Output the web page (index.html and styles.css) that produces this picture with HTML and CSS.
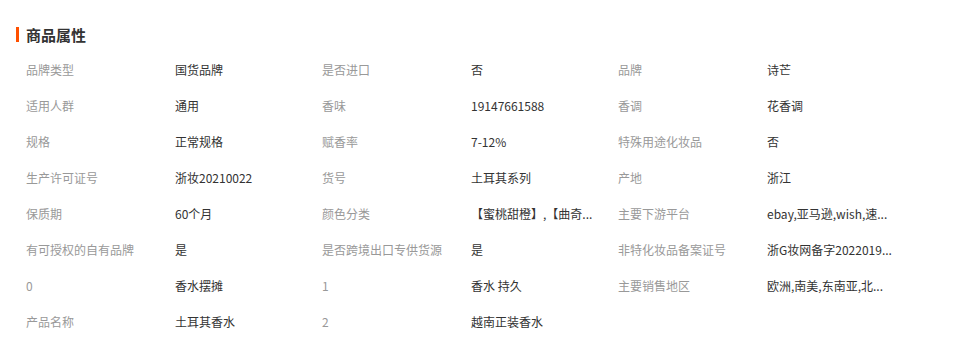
FILE: index.html
```html
<!DOCTYPE html>
<html lang="zh-CN">
<head>
<meta charset="utf-8">
<link rel="stylesheet" href="styles.css">
</head>
<body>
<div class="attrs">
  <h2 class="attrs-title">商品属性</h2>
  <div class="attrs-grid">
    <div class="cell"><span class="label">品牌类型</span><span class="value">国货品牌</span></div>
    <div class="cell"><span class="label">是否进口</span><span class="value">否</span></div>
    <div class="cell"><span class="label">品牌</span><span class="value">诗芒</span></div>
    <div class="cell"><span class="label">适用人群</span><span class="value">通用</span></div>
    <div class="cell"><span class="label">香味</span><span class="value">19147661588</span></div>
    <div class="cell"><span class="label">香调</span><span class="value">花香调</span></div>
    <div class="cell"><span class="label">规格</span><span class="value">正常规格</span></div>
    <div class="cell"><span class="label">赋香率</span><span class="value">7-12%</span></div>
    <div class="cell"><span class="label">特殊用途化妆品</span><span class="value">否</span></div>
    <div class="cell"><span class="label">生产许可证号</span><span class="value">浙妆20210022</span></div>
    <div class="cell"><span class="label">货号</span><span class="value">土耳其系列</span></div>
    <div class="cell"><span class="label">产地</span><span class="value">浙江</span></div>
    <div class="cell"><span class="label">保质期</span><span class="value">60个月</span></div>
    <div class="cell"><span class="label">颜色分类</span><span class="value">【蜜桃甜橙】,【曲奇...</span></div>
    <div class="cell"><span class="label">主要下游平台</span><span class="value">ebay,亚马逊,wish,速...</span></div>
    <div class="cell"><span class="label">有可授权的自有品牌</span><span class="value">是</span></div>
    <div class="cell"><span class="label">是否跨境出口专供货源</span><span class="value">是</span></div>
    <div class="cell"><span class="label">非特化妆品备案证号</span><span class="value">浙G妆网备字2022019...</span></div>
    <div class="cell"><span class="label">0</span><span class="value">香水摆摊</span></div>
    <div class="cell"><span class="label">1</span><span class="value">香水 持久</span></div>
    <div class="cell"><span class="label">主要销售地区</span><span class="value">欧洲,南美,东南亚,北...</span></div>
    <div class="cell"><span class="label">产品名称</span><span class="value">土耳其香水</span></div>
    <div class="cell"><span class="label">2</span><span class="value">越南正装香水</span></div>
  </div>
</div>
</body>
</html>
```
FILE: styles.css
```css
* { box-sizing: border-box; }
body {
  margin: 0;
  background: #fff;
  font-family: "Noto Sans CJK SC", "Microsoft YaHei", sans-serif;
  color: #333;
}
.attrs {
  padding: 24px 0 0 16px;
}
.attrs-title {
  margin: 0;
  font-size: 15px;
  line-height: 20px;
  font-weight: bold;
  color: #333;
  border-left: 3px solid #ff5000;
  padding-left: 7px;
  height: 15px;
  display: flex;
  align-items: center;
  margin-top: 3px;
}
.attrs-grid {
  margin-top: 9px;
  padding-left: 10px;
  display: grid;
  grid-template-columns: repeat(3, 296px);
}
.cell {
  display: flex;
  height: 36px;
  align-items: center;
  font-size: 12px;
}
.label {
  width: 149px;
  flex: none;
  color: #999;
  white-space: nowrap;
}
.value {
  color: #333;
  white-space: nowrap;
}
```
